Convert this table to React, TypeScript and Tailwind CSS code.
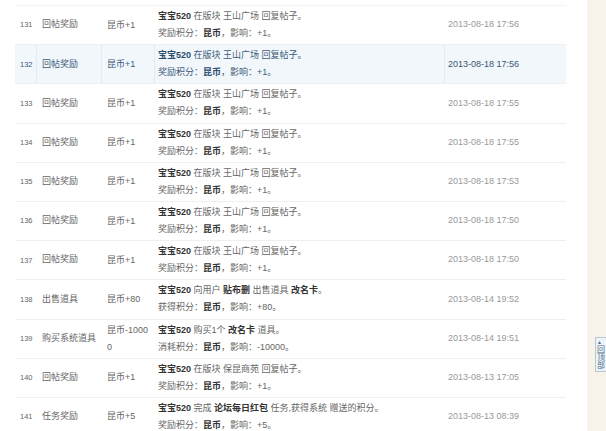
import React from "react";

type Row = {
  id: number;
  type: string;
  amount: string;
  desc: React.ReactNode;
  detail: React.ReactNode;
  time: string;
};

const B = ({ children }: { children: React.ReactNode }) => <b className="font-bold">{children}</b>;

function reply(place: string) {
  return (
    <>
      <B>宝宝520</B> 在版块 {place} 回复帖子。
    </>
  );
}

function score(label: string, v: string) {
  return (
    <>
      {label}积分：<B>昆币</B>，影响：{v}。
    </>
  );
}

const rows: Row[] = [
  { id: 131, type: "回帖奖励", amount: "昆币+1", desc: reply("王山广场"), detail: score("奖励", "+1"), time: "2013-08-18 17:56" },
  { id: 132, type: "回帖奖励", amount: "昆币+1", desc: reply("王山广场"), detail: score("奖励", "+1"), time: "2013-08-18 17:56" },
  { id: 133, type: "回帖奖励", amount: "昆币+1", desc: reply("王山广场"), detail: score("奖励", "+1"), time: "2013-08-18 17:55" },
  { id: 134, type: "回帖奖励", amount: "昆币+1", desc: reply("王山广场"), detail: score("奖励", "+1"), time: "2013-08-18 17:55" },
  { id: 135, type: "回帖奖励", amount: "昆币+1", desc: reply("王山广场"), detail: score("奖励", "+1"), time: "2013-08-18 17:53" },
  { id: 136, type: "回帖奖励", amount: "昆币+1", desc: reply("王山广场"), detail: score("奖励", "+1"), time: "2013-08-18 17:50" },
  { id: 137, type: "回帖奖励", amount: "昆币+1", desc: reply("王山广场"), detail: score("奖励", "+1"), time: "2013-08-18 17:50" },
  {
    id: 138,
    type: "出售道具",
    amount: "昆币+80",
    desc: (
      <>
        <B>宝宝520</B> 向用户 <B>贴布删</B> 出售道具 <B>改名卡</B>。
      </>
    ),
    detail: score("获得", "+80"),
    time: "2013-08-14 19:52",
  },
  {
    id: 139,
    type: "购买系统道具",
    amount: "昆币-10000",
    desc: (
      <>
        <B>宝宝520</B> 购买1个 <B>改名卡</B> 道具。
      </>
    ),
    detail: score("消耗", "-10000"),
    time: "2013-08-14 19:51",
  },
  { id: 140, type: "回帖奖励", amount: "昆币+1", desc: reply("保昆商苑"), detail: score("奖励", "+1"), time: "2013-08-13 17:05" },
  {
    id: 141,
    type: "任务奖励",
    amount: "昆币+5",
    desc: (
      <>
        <B>宝宝520</B> 完成 <B>论坛每日红包</B> 任务,获得系统 赠送的积分。
      </>
    ),
    detail: score("奖励", "+5"),
    time: "2013-08-13 08:39",
  },
];

function LogRow({ r, active }: { r: Row; active: boolean }) {
  const cell = active ? "border-r border-[#e3ebf2]" : "";
  return (
    <div
      className={
        "flex h-[38.2px] box-content border-b border-[#efefef] " +
        (active ? "bg-[#f2f7fc] text-[#3c5a78]" : "text-[#666]")
      }
    >
      <div className={"w-[22px] shrink-0 pl-[5px] flex items-center text-[7.5px] " + cell}>{r.id}</div>
      <div className={"w-[65px] shrink-0 pl-[5px] flex items-center " + cell}>{r.type}</div>
      <div className={"w-[53px] shrink-0 pl-[5px] pr-[4px] flex items-center leading-[17px] break-all " + cell}>
        {r.amount}
      </div>
      <div
        className={
          "w-[290px] shrink-0 pl-[3px] flex flex-col justify-center leading-[17px] " +
          cell +
          (active ? " [&_b]:text-[#2c4d6c]" : " [&_b]:text-[#333]")
        }
      >
        <div className="whitespace-nowrap">{r.desc}</div>
        <div className="whitespace-nowrap">{r.detail}</div>
      </div>
      <div className={"flex-1 pl-[3px] flex items-center " + (active ? "text-[#3a5570]" : "text-[#999]")}>
        {r.time}
      </div>
    </div>
  );
}

export default function App() {
  return (
    <div
      className="relative flex h-[431px] w-[606px] overflow-hidden bg-white text-[9px]"
      style={{ fontFamily: '"Liberation Sans", "Noto Sans CJK SC", sans-serif' }}
    >
      <div className="w-[587px] shrink-0 pt-[5px]">
        <div className="ml-[15px] w-[551px] border-t border-[#f3f3f3]">
          {rows.map((r) => (
            <LogRow key={r.id} r={r} active={r.id === 132} />
          ))}
        </div>
      </div>
      <div className="flex-1 bg-[#f7f3e9]" />

      <div className="absolute left-[595px] top-[337px] flex w-[16px] flex-col items-start border border-[#b8c7d6] bg-[#eef3f8] pl-[1px] pt-[1px] pb-[1px] text-[8px] leading-[8px] text-[#4f6f8f]">
        <span className="text-[5px] leading-[7px]">▲</span>
        <span>回</span>
        <span>顶</span>
        <span>部</span>
      </div>
    </div>
  );
}
